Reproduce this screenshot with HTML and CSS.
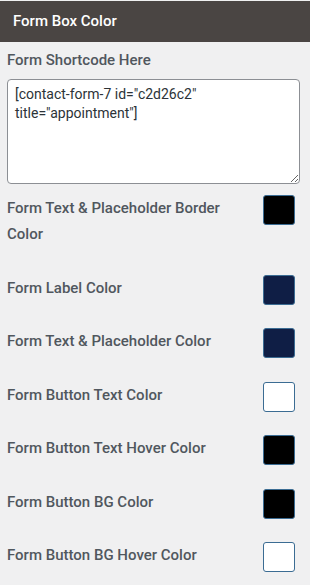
FILE: index.html
```html
<!DOCTYPE html>
<html lang="en">
<head>
    <meta charset="UTF-8">
    <meta name="viewport" content="width=device-width, initial-scale=1.0">
    <title>Form Box Color</title>
    <link rel="stylesheet" href="styles.css">
</head>
<body>

<div class="panel">
    <div class="panel-head">Form Box Color</div>

    <div class="panel-body">
        <div class="field">
            <label for="shortcode">Form Shortcode Here</label>
            <textarea id="shortcode">[contact-form-7 id="c2d26c2" title="appointment"]</textarea>
        </div>

        <div class="color-row">
            <span class="color-label">Form Text &amp; Placeholder Border Color</span>
            <span class="swatch swatch-black"></span>
        </div>
        <div class="color-row">
            <span class="color-label">Form Label Color</span>
            <span class="swatch swatch-navy"></span>
        </div>
        <div class="color-row">
            <span class="color-label">Form Text &amp; Placeholder Color</span>
            <span class="swatch swatch-navy"></span>
        </div>
        <div class="color-row">
            <span class="color-label">Form Button Text Color</span>
            <span class="swatch swatch-white"></span>
        </div>
        <div class="color-row">
            <span class="color-label">Form Button Text Hover Color</span>
            <span class="swatch swatch-black"></span>
        </div>
        <div class="color-row">
            <span class="color-label">Form Button BG Color</span>
            <span class="swatch swatch-black"></span>
        </div>
        <div class="color-row">
            <span class="color-label">Form Button BG Hover Color</span>
            <span class="swatch swatch-white"></span>
        </div>
    </div>
</div>

</body>
</html>
```

FILE: styles.css
```css
body {
    margin: 0;
    font-family: Roboto, "Liberation Sans", sans-serif;
    background: #f0f0f1;
    color: #50575e;
}
.panel-head {
    margin-top: 1px;
    height: 41px;
    line-height: 41px;
    padding-left: 13px;
    background: #4a4543;
    color: #fff;
    font-size: 15px;
    font-weight: 500;
}
.panel-body {
    padding: 8px 15px 0 7px;
}
.field label {
    display: block;
    font-size: 15px;
    font-weight: 500;
    line-height: 20px;
    margin-bottom: 9px;
}
textarea {
    display: block;
    box-sizing: border-box;
    width: 293px;
    height: 105px;
    padding: 5px 7px;
    margin-bottom: 11px;
    border: 1px solid #8c8f94;
    border-radius: 4px;
    background: #fff;
    color: #2c3338;
    font-family: Roboto, "Liberation Sans", sans-serif;
    font-size: 14px;
    line-height: 19px;
    resize: vertical;
}
.color-row {
    display: flex;
    justify-content: space-between;
    align-items: flex-start;
    margin-bottom: 23.5px;
}
.color-label {
    width: 240px;
    padding-bottom: 4px;
    font-size: 15px;
    font-weight: 500;
    line-height: 26px;
}
.swatch {
    box-sizing: border-box;
    width: 32px;
    height: 30px;
    border: 1px solid #3b6c93;
    border-radius: 3px;
}
.swatch-black {
    background: #000;
}
.swatch-navy {
    background: #0f1e45;
}
.swatch-white {
    background: #fff;
}
```
